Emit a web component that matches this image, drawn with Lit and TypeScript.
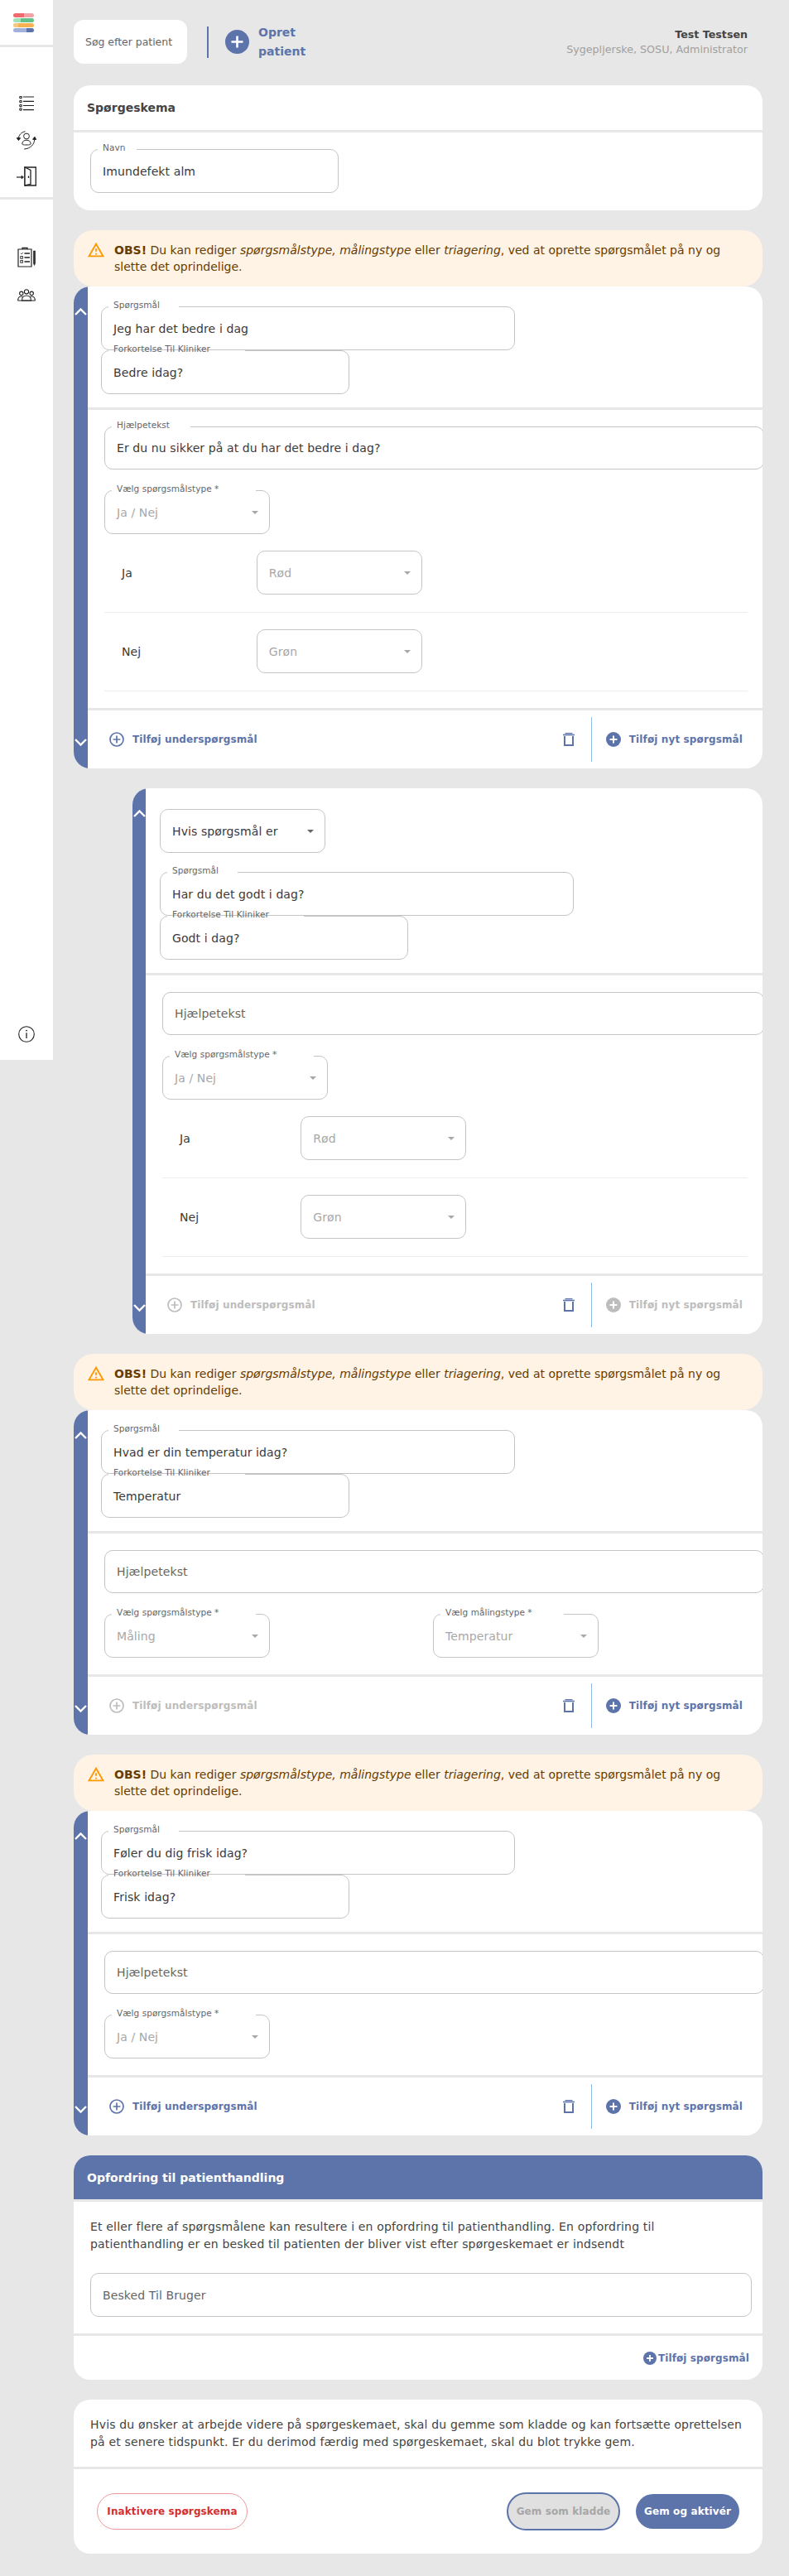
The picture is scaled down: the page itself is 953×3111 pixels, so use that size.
import { LitElement, html, css, nothing } from "lit";
import { customElement } from "lit/decorators.js";

const plusFilled = html`<svg class="pf" viewBox="0 0 18 18"><circle cx="9" cy="9" r="9" fill="currentColor"/><path d="M9 4.6v8.8M4.6 9h8.8" stroke="#fff" stroke-width="2" fill="none"/></svg>`;
const plusOutline = html`<svg class="po" viewBox="0 0 18 18"><circle cx="9" cy="9" r="8" fill="none" stroke="currentColor" stroke-width="1.7"/><path d="M9 4.6v8.8M4.6 9h8.8" stroke="currentColor" stroke-width="1.7" fill="none"/></svg>`;
const trash = html`<svg class="trash" viewBox="0 0 14 16"><rect x="2.500" y="0" width="9" height="1.300" fill="currentColor"/><rect x="0" y="1.700" width="14" height="1.600" fill="currentColor"/><path d="M2 4v11h10V4" stroke="currentColor" stroke-width="2" fill="none"/></svg>`;
const warnIcon = html`<svg class="warn-i" viewBox="0 0 24 24"><path fill="#ff9800" d="M12 5.99L19.53 19H4.47L12 5.99M12 2L1 21h22L12 2zm1 14h-2v2h2v-2zm0-6h-2v4h2v-4z"/></svg>`;
const chevUp = html`<svg class="chev" viewBox="0 0 15 9"><path d="M1 8l6.500-6.500L14 8" fill="none" stroke="#fff" stroke-width="2.400"/></svg>`;
const chevDown = html`<svg class="chev" viewBox="0 0 15 9"><path d="M1 1l6.500 6.500L14 1" fill="none" stroke="#fff" stroke-width="2.400"/></svg>`;

const icoList = html`<svg class="ico i-list" viewBox="0 0 18 18" fill="none" stroke="#222"><g stroke-width="1.100"><circle cx="2" cy="1.500" r="1.300"/><circle cx="2" cy="6.500" r="1.300"/><circle cx="2" cy="11.500" r="1.300"/><circle cx="2" cy="16" r="1.300"/></g><path d="M5 1h13M5 6.300h13M5 11.500h13M5 16.700h13" stroke-width="1.200"/></svg>`;
const icoCycle = html`<svg class="ico i-cycle" viewBox="0 0 24 23" fill="none" stroke="#222" stroke-width="1"><circle cx="12" cy="6.500" r="3.400"/><path d="M6.800 16c0-3.300 2.300-4.800 5.200-4.800s5.200 1.500 5.200 4.800c0 .5-1 1-5.200 1s-5.200-.5-5.200-1z"/><path d="M2.300 10.200C2.300 5.500 5.500 1.500 10.500.8"/><path d="M.2 8.500l2.200 3 2.200-2.800z" fill="#222"/><path d="M21.700 10c0 6-4.500 11.500-12.500 12"/><path d="M19.600 10.300l2.300-3 1.800 3.200z" fill="#222"/></svg>`;
const icoDoor = html`<svg class="ico i-door" viewBox="0 0 24 24" fill="none" stroke="#222"><path d="M0 13h7" stroke-width="1.200"/><path d="M6 11l2.500 2L6 15z" fill="#222" stroke-width=".6"/><path d="M10 1h13.300v22H10z" stroke-width="1.300"/><path d="M10 1l7 3.500v17L10 23z" stroke-width="1.300" fill="#fff"/><path d="M14.500 11.500v2.500" stroke-width="1.400"/></svg>`;
const icoClip = html`<svg class="ico i-clip" viewBox="0 0 22 25" fill="none" stroke="#222"><path d="M1 3h16v21H1z" stroke-width="1.200"/><path d="M6 3V1.500h6V3" stroke-width="1.300"/><path d="M4 7.800l1 1 1.800-2" stroke-width=".9"/><path d="M8.500 8h6.500M8.500 13h6.500M8.500 18h6.500" stroke-width="1.300"/><rect x="3.800" y="11.600" width="2.600" height="2.600" stroke-width=".9"/><rect x="3.800" y="16.600" width="2.600" height="2.600" stroke-width=".9"/><path d="M19.500 5v15l1 2.500 1-2.500V5z" fill="#333" stroke-width=".7"/></svg>`;
const icoGroup = html`<svg class="ico i-group" viewBox="0 0 22 15" fill="none" stroke="#222" stroke-width="1.100"><circle cx="11" cy="3.300" r="2.600"/><circle cx="4.800" cy="5.300" r="2.200"/><circle cx="17.200" cy="5.300" r="2.200"/><path d="M5.500 14c0-4 2.300-6 5.500-6s5.500 2 5.500 6z"/><path d="M.6 14c0-3.300 1.500-5 4.200-5 .7 0 1.300.1 1.800.3M21.400 14c0-3.300-1.500-5-4.200-5-.7 0-1.300.1-1.800.3M.6 14h20.800"/></svg>`;
const icoInfo = html`<svg class="ico i-info" viewBox="0 0 20 20" fill="none" stroke="#222"><circle cx="10" cy="10" r="9.300" stroke-width="1.100"/><path d="M10 8.300v6.800" stroke-width="1.300"/><circle cx="10" cy="5.600" r=".9" fill="#222" stroke="none"/></svg>`;

type FieldOpts = { select?: boolean; disabled?: boolean; placeholder?: boolean };

const ruler = document.createElement("canvas").getContext("2d")!;
ruler.font = '14px "DejaVu Sans"';
const notch = (label: string) => (label ? Math.ceil(ruler.measureText(label).width) + 10 : 0);

function field(label: string, value: string, cls: string, o: FieldOpts = {}) {
  return html`<div class="field ${cls}">
    <fieldset><legend style="width:${notch(label)}px"></legend></fieldset>
    ${label ? html`<div class="lab">${label}</div>` : nothing}
    <div class="val ${o.disabled ? "dis" : ""} ${o.placeholder ? "ph" : ""}">${value}</div>
    ${o.select ? html`<i class="arrow ${o.disabled ? "" : "dark"}"></i>` : nothing}
  </div>`;
}

const warning = html`<div class="warn">${warnIcon}<div class="warn-t"><b>OBS!</b> Du kan rediger <em>spørgsmålstype, målingstype</em> eller <em>triagering</em>, ved at oprette spørgsmålet på ny og slette det oprindelige.</div></div>`;

type Q = {
  sub?: boolean; q: string; short: string; help?: string; measure?: boolean; rows?: boolean; addDisabled?: boolean;
};

function question(d: Q) {
  return html`<section class="q ${d.sub ? "sub" : ""}">
    <div class="bar">${chevUp}${chevDown}</div>
    <div class="q-main">
      <div class="s1 ${d.sub ? "s1sub" : ""}">
        ${d.sub ? html`<div class="cond">${field("", "Hvis spørgsmål er", "w200", { select: true })}</div>` : nothing}
        ${field("Spørgsmål", d.q, "w500")}
        ${field("Forkortelse Til Kliniker", d.short, "w300")}
      </div>
      <div class="s2">
        ${d.help ? field("Hjælpetekst", d.help, "wide h52") : field("", "Hjælpetekst", "wide h52", { placeholder: true })}
        <div class="types">
          ${field("Vælg spørgsmålstype *", d.measure ? "Måling" : "Ja / Nej", "w200", { select: true, disabled: true })}
          ${d.measure ? field("Vælg målingstype *", "Temperatur", "w200", { select: true, disabled: true }) : nothing}
        </div>
        ${d.rows
          ? html`<div class="rows">
              <div class="row"><span>Ja</span>${field("", "Rød", "w200", { select: true, disabled: true })}</div>
              <div class="row"><span>Nej</span>${field("", "Grøn", "w200", { select: true, disabled: true })}</div>
            </div>`
          : nothing}
      </div>
      <div class="foot">
        <div class="add-sub ${d.addDisabled ? "off" : ""}">${plusOutline}<span>Tilføj underspørgsmål</span></div>
        <div class="del">${trash}</div>
        <div class="add-new ${d.sub ? "off" : ""}">${plusFilled}<span>Tilføj nyt spørgsmål</span></div>
      </div>
    </div>
  </section>`;
}

@customElement("app-root")
export class AppRoot extends LitElement {
  static styles = css`
    :host { display: block; width: 953px; background: #e7e7e7; font-family: "DejaVu Sans", sans-serif; color: #3a3a3a; font-size: 14px; }
    * { box-sizing: border-box; }
    .page { display: flex; align-items: flex-start; min-height: 3111px; }
    .side { width: 64px; height: 1280px; background: #fff; flex: none; display: flex; flex-direction: column; align-items: center; margin-right: 25px; }
    .logo-box { width: 100%; height: 57px; border-bottom: 3px solid #e7e7e7; padding: 16px 0 0 16px; display: flex; flex-direction: column; gap: 1px; }
    .logo-box i { display: block; width: 25px; height: 5px; border-radius: 2.500px; }
    .l1 { background: linear-gradient(90deg, #ee6b70 52%, #f2a3a7 52%); }
    .l2 { background: linear-gradient(90deg, #a0e3b8 36%, #65c08a 36%); }
    .l3 { background: linear-gradient(90deg, #f3c884 24%, #f7b352 24%); }
    .l4 { background: linear-gradient(90deg, #a2b1da 64%, #5d74ab 64%); }
    .nav1 { width: 100%; height: 184px; border-bottom: 3px solid #e7e7e7; display: flex; flex-direction: column; align-items: center; padding-top: 59px; }
    .nav1 .ico:nth-child(1) { margin-bottom: 24px; }
    .nav1 .ico:nth-child(2) { margin-bottom: 20px; }
    .nav2 { display: flex; flex-direction: column; align-items: center; padding-top: 57px; gap: 26px; }
    .nav3 { margin-top: auto; padding-bottom: 21px; }
    .ico { display: block; }
    .i-list { width: 18px; height: 18px; }
    .i-cycle { width: 24px; height: 23px; }
    .i-door { width: 24px; height: 24px; }
    .i-clip { width: 22px; height: 25px; }
    .i-group { width: 22px; height: 15px; }
    .i-info { width: 20px; height: 20px; }

    .main { width: 832px; flex: none; padding: 24px 0 25px; display: flex; flex-direction: column; gap: 24px; }
    .top { display: flex; align-items: center; height: 53px; margin-bottom: 2px; }
    .search { width: 137px; height: 53px; border-radius: 12px; background: #fff; color: #666; font-size: 12.450px; display: flex; align-items: center; padding-left: 14px; white-space: nowrap; }
    .vr { width: 2px; height: 38px; background: #5d74ab; margin: 0 20px 0 24px; }
    .opret { display: flex; align-items: center; gap: 11px; color: #5d74ab; font-weight: 700; font-size: 14px; line-height: 23px; }
    .opret svg { width: 29px; height: 29px; display: block; }
    .user { margin-left: auto; padding-right: 18px; text-align: right; font-size: 12.700px; line-height: 18px; color: #a0a0a0; }
    .user b { display: block; color: #444; font-size: 12.650px; }

    .card { background: #fff; border-radius: 20px; overflow: hidden; }
    .card-h { height: 57px; display: flex; align-items: center; padding-left: 16px; font-weight: 700; font-size: 14px; color: #444; border-bottom: 3px solid #e7e7e7; }
    .card-b { padding: 20px 20px 21px; }

    .field { position: relative; height: 53px; flex: none; }
    .h52 { height: 52px; }
    .w200 { width: 200px; }
    .w300 { width: 300px; }
    .w500 { width: 500px; }
    .wide { width: calc(100% + 2px); }
    fieldset { position: absolute; inset: -5px 0 0 0; margin: 0; padding: 0 8px; border: 1px solid #c4c4c4; border-radius: 10px; min-width: 0; pointer-events: none; }
    legend { padding: 0; height: 11px; display: block; }
    .lab { position: absolute; left: 15px; top: -8px; font-size: 10.500px; letter-spacing: .05px; line-height: 13px; color: #666; white-space: nowrap; }
    .val { position: absolute; left: 15px; top: 0; bottom: 0; display: flex; align-items: center; font-size: 14px; letter-spacing: .1px; color: #3a3a3a; white-space: nowrap; }
    .val.dis { color: #a8a8a8; }
    .val.ph { color: #666; }
    .arrow { position: absolute; right: 14px; top: 25px; width: 0; height: 0; border-left: 4px solid transparent; border-right: 4px solid transparent; border-top: 4px solid #a8a8a8; }
    .arrow.dark { border-top-color: #666; }

    .warn { background: #fff3e6; border-radius: 24px; display: flex; padding: 6px 16px 6px 17px; color: #663c00; min-height: 68px; }
    .warn-i { width: 22px; height: 22px; flex: none; margin: 7px 11px 0 -1px; display: block; }
    .warn-t { padding: 8px 0; line-height: 20px; font-size: 14px; }
    .warn-t b { font-weight: 700; }
    .group { display: flex; flex-direction: column; }

    .q { display: flex; background: #fff; border-radius: 20px; overflow: hidden; }
    .q.sub { margin-left: 71px; }
    .bar { width: 17px; flex: none; background: #5d74ab; display: flex; flex-direction: column; justify-content: space-between; align-items: center; padding: 26px 0 27px; }
    .sub .bar { width: 16px; }
    .chev { width: 15px; height: 9px; display: block; }
    .q-main { flex: 1; min-width: 0; }
    .s1 { padding: 24px 0 16px 16px; border-bottom: 3px solid #e7e7e7; }
    .s1sub { padding-top: 25px; padding-left: 17px; }
    .cond { margin-bottom: 23px; }
    .s2 { padding: 20px 0 20px 20px; border-bottom: 3px solid #e7e7e7; }
    .types { display: grid; grid-template-columns: 397px 200px; margin-top: 25px; }
    .rows { margin-right: 18px; }
    .row { display: grid; grid-template-columns: 23.650% 200px; align-items: center; padding: 20px 0 21px; border-bottom: 1px solid #eee; }
    .row span { padding-left: 21px; color: #3a3a3a; font-size: 14px; letter-spacing: .1px; }
    .foot { height: 70px; display: flex; align-items: center; font-size: 12px; letter-spacing: .12px; font-weight: 700; color: #5d74ab; }
    .pf, .po { width: 18px; height: 18px; display: block; flex: none; }
    .add-sub { display: flex; align-items: center; gap: 10px; padding-left: 26px; }
    .del { margin-left: auto; width: 14px; margin-right: 20px; color: #5d74ab; }
    .trash { width: 14px; height: 16px; display: block; }
    .add-new { display: flex; align-items: center; gap: 10px; height: 54px; border-left: 1px solid #90bbe8; padding: 0 24px 0 17px; }
    .off { color: #bdbdbd; }

    .opf-h { height: 53px; background: #5d74ab; color: #fff; font-weight: 700; font-size: 14px; display: flex; align-items: center; padding-left: 16px; }
    .opf-b { border-top: 3px solid #e7e7e7; border-bottom: 3px solid #e7e7e7; padding: 20px 13px 20px 20px; }
    .para { margin: 0; font-size: 14px; letter-spacing: .17px; line-height: 21px; color: #444; }
    .opf-b .para { margin-bottom: 24px; }
    .msg { width: 799px; }
    .opf-f { height: 53px; display: flex; justify-content: flex-end; align-items: center; padding-right: 16px; gap: 2px; color: #5d74ab; font-size: 12px; letter-spacing: .09px; font-weight: 700; }
    .opf-f svg { width: 16px; height: 16px; display: block; }

    .end-t { padding: 20px 13px 19px 20px; border-bottom: 3px solid #e7e7e7; }
    .end-f { height: 102px; display: flex; align-items: center; padding: 0 28px; font-size: 12px; letter-spacing: .1px; font-weight: 700; }
    .btn { display: flex; align-items: center; justify-content: center; white-space: nowrap; border-radius: 23px; }
    .b-red { width: 182px; height: 44px; border: 1px solid #ef9a9a; color: #d32f2f; }
    .b-draft { width: 137px; height: 46px; margin-left: auto; border: 2px solid #5d74ab; background: #e0e0e0; color: #a6a6a6; }
    .b-go { width: 125px; height: 42px; margin-left: 19px; background: #5d74ab; color: #fff; }
  `;

  render() {
    return html`<div class="page">
      <aside class="side">
        <div class="logo-box"><i class="l1"></i><i class="l2"></i><i class="l3"></i><i class="l4"></i></div>
        <div class="nav1">${icoList}${icoCycle}${icoDoor}</div>
        <div class="nav2">${icoClip}${icoGroup}</div>
        <div class="nav3">${icoInfo}</div>
      </aside>
      <main class="main">
        <div class="top">
          <div class="search">Søg efter patient</div>
          <div class="vr"></div>
          <div class="opret">
            <svg viewBox="0 0 29 29"><circle cx="14.500" cy="14.500" r="14.500" fill="#5d74ab"/><path d="M14.500 7.500v14M7.500 14.500h14" stroke="#fff" stroke-width="2.600" fill="none"/></svg>
            <div>Opret<br />patient</div>
          </div>
          <div class="user"><b>Test Testsen</b>Sygepljerske, SOSU, Administrator</div>
        </div>

        <section class="card">
          <div class="card-h">Spørgeskema</div>
          <div class="card-b">${field("Navn", "Imundefekt alm", "w300")}</div>
        </section>

        <div class="group">${warning}${question({ q: "Jeg har det bedre i dag", short: "Bedre idag?", help: "Er du nu sikker på at du har det bedre i dag?", rows: true })}</div>
        ${question({ sub: true, q: "Har du det godt i dag?", short: "Godt i dag?", rows: true, addDisabled: true })}
        <div class="group">${warning}${question({ q: "Hvad er din temperatur idag?", short: "Temperatur", measure: true, addDisabled: true })}</div>
        <div class="group">${warning}${question({ q: "Føler du dig frisk idag?", short: "Frisk idag?" })}</div>

        <section class="card">
          <div class="opf-h">Opfordring til patienthandling</div>
          <div class="opf-b">
            <p class="para">Et eller flere af spørgsmålene kan resultere i en opfordring til patienthandling. En opfordring til patienthandling er en besked til patienten der bliver vist efter spørgeskemaet er indsendt</p>
            ${field("", "Besked Til Bruger", "msg", { placeholder: true })}
          </div>
          <div class="opf-f">${plusFilled}<span>Tilføj spørgsmål</span></div>
        </section>

        <section class="card">
          <div class="end-t"><p class="para">Hvis du ønsker at arbejde videre på spørgeskemaet, skal du gemme som kladde og kan fortsætte oprettelsen på et senere tidspunkt. Er du derimod færdig med spørgeskemaet, skal du blot trykke gem.</p></div>
          <div class="end-f">
            <div class="btn b-red">Inaktivere spørgskema</div>
            <div class="btn b-draft">Gem som kladde</div>
            <div class="btn b-go">Gem og aktivér</div>
          </div>
        </section>
      </main>
    </div>`;
  }
}
